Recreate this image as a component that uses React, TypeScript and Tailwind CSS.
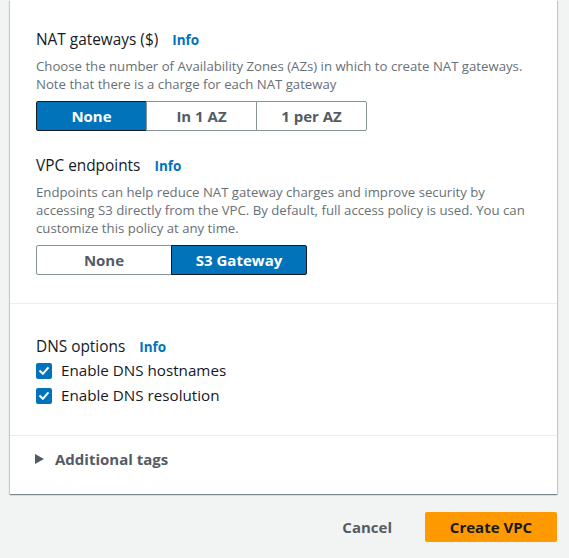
import React from "react";

function Info() {
  return <span className="ml-[14px] text-[13.5px] font-bold text-[#0073bb]">Info</span>;
}

function Seg({ items, selected, w }: { items: string[]; selected: number; w: string }) {
  return (
    <div className="flex">
      {items.map((t, i) => {
        const sel = i === selected;
        const first = i === 0;
        const last = i === items.length - 1;
        return (
          <div
            key={t}
            className={
              "flex h-[30px] items-center justify-center border text-[15px] font-bold " +
              w +
              (sel ? " border-[#16191f] bg-[#0073bb] text-white" : " border-[#879596] bg-white text-[#545b64]") +
              (first ? " rounded-l-[2px]" : " -ml-px") +
              (last ? " rounded-r-[2px]" : "")
            }
          >
            {t}
          </div>
        );
      })}
    </div>
  );
}

function Check({ label }: { label: string }) {
  return (
    <div className="flex h-[25px] items-center">
      <div className="flex h-[16px] w-[16px] items-center justify-center rounded-[2px] bg-[#0073bb]">
        <svg width="12" height="12" viewBox="0 0 12 12">
          <path d="M2.2 6.2 L4.9 8.8 L9.8 3.2" fill="none" stroke="white" strokeWidth="2" strokeLinecap="square" />
        </svg>
      </div>
      <span className="ml-[9px] text-[15.2px] text-[#16191f]">{label}</span>
    </div>
  );
}

export default function App() {
  return (
    <div className="min-h-[558px] w-[569px] bg-[#f2f3f3] font-['Open_Sans',sans-serif]">
      <div className="ml-[10px] mr-[12px] bg-white shadow-[0_1px_1px_0_rgba(0,28,36,0.3),1px_1px_1px_0_rgba(0,28,36,0.15),-1px_1px_1px_0_rgba(0,28,36,0.15)]">
        <div className="px-[26px] pb-[28px] pt-[29px]">
          <div className="flex items-center text-[15.4px] leading-[22px] text-[#16191f]">
            NAT gateways ($)<Info />
          </div>
          <p className="mt-[6px] text-[13.2px] leading-[18px] text-[#687078]">
            Choose the number of Availability Zones (AZs) in which to create NAT gateways.
            <br />
            Note that there is a charge for each NAT gateway
          </p>
          <div className="mt-[8px]">
            <Seg items={["None", "In 1 AZ", "1 per AZ"]} selected={0} w="w-[111px]" />
          </div>
          <div className="mt-[24px] flex items-center text-[15.4px] leading-[22px] text-[#16191f]">
            VPC endpoints<Info />
          </div>
          <p className="mt-[6px] text-[13.2px] leading-[18px] text-[#687078]">
            Endpoints can help reduce NAT gateway charges and improve security by
            <br />
            accessing S3 directly from the VPC. By default, full access policy is used. You can
            <br />
            customize this policy at any time.
          </p>
          <div className="mt-[8px]">
            <Seg items={["None", "S3 Gateway"]} selected={1} w="w-[136px]" />
          </div>
        </div>
        <div className="border-t border-[#eaeded] px-[26px] pb-[27px] pt-[32px]">
          <div className="flex items-center text-[15.4px] leading-[22px] text-[#16191f]">
            DNS options<Info />
          </div>
          <Check label="Enable DNS hostnames" />
          <Check label="Enable DNS resolution" />
        </div>
        <div className="border-t border-[#eaeded] px-[25px] pb-[25px] pt-[13px]">
          <div className="flex h-[20px] items-center">
            <svg width="9" height="10" viewBox="0 0 9 10">
              <path d="M0 0 L9 5 L0 10 Z" fill="#545b64" />
            </svg>
            <span className="ml-[11px] text-[15px] font-bold text-[#545b64]">Additional tags</span>
          </div>
        </div>
      </div>
      <div className="mr-[12px] mt-[18px] flex items-center justify-end">
        <span className="mr-[33px] text-[15px] font-bold text-[#545b64]">Cancel</span>
        <div className="flex h-[30px] w-[132px] items-center justify-center rounded-[2px] bg-[#ff9900] text-[15px] font-bold text-[#16191f]">
          Create VPC
        </div>
      </div>
    </div>
  );
}
